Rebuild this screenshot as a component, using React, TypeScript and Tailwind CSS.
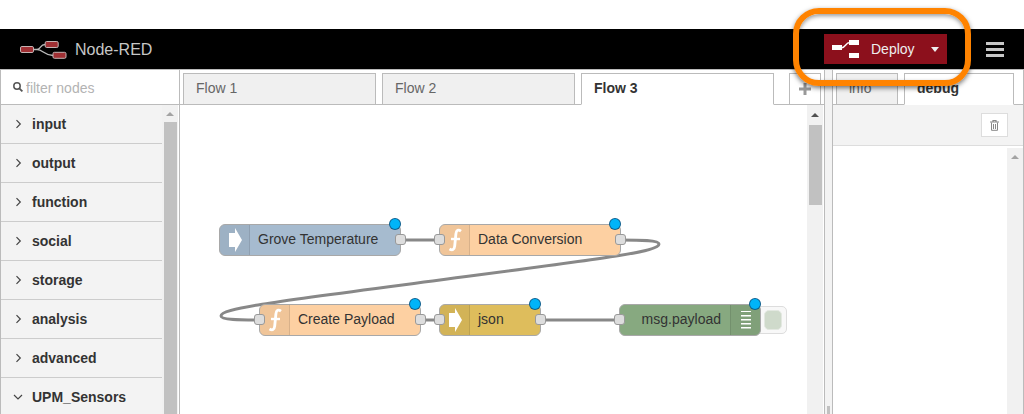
import React from "react";

const categories = [
  { name: "input", open: false },
  { name: "output", open: false },
  { name: "function", open: false },
  { name: "social", open: false },
  { name: "storage", open: false },
  { name: "analysis", open: false },
  { name: "advanced", open: false },
  { name: "UPM_Sensors", open: true },
];

const flows = ["Flow 1", "Flow 2", "Flow 3"];

function Logo() {
  return (
    <svg className="h-5 w-12 shrink-0" viewBox="0 0 48 20" fill="none">
      <path d="M13 10.5H17C21 10.5 20 5.5 25 5.5M17 10.5C23 10.5 24 16.5 33 16.5" stroke="#bbb" strokeWidth="1.3" />
      <rect x="0.5" y="7.5" width="13" height="6" rx="1.4" fill="#a03034" stroke="#c4b4b4" />
      <rect x="25.2" y="2.5" width="13" height="6" rx="1.4" fill="#a03034" stroke="#c4b4b4" />
      <rect x="33" y="13.3" width="13" height="6" rx="1.4" fill="#a03034" stroke="#c4b4b4" />
    </svg>
  );
}

function Arrow({ dark = false }: { dark?: boolean }) {
  return (
    <svg className="h-1 w-2" viewBox="0 0 8 4">
      <path d="M0 4L4 0L8 4Z" fill={dark ? "#505050" : "#a3a3a3"} />
    </svg>
  );
}

function ArrowIcon() {
  return (
    <svg className="h-[26px] w-[14px]" viewBox="0 0 14 26">
      <path d="M1 6H7V1L14 13L7 25V20H1Z" fill="#fff" />
    </svg>
  );
}

function FunctionIcon() {
  return (
    <svg className="h-6 w-[14px]" viewBox="0 0 14 24" fill="none" stroke="#fff">
      <path d="M13 3.2C10.3 1.2 8.3 2 7.9 6L6.7 18C6.3 22 4.3 22.6 1.5 21" strokeWidth="2.8" />
      <path d="M3 11H12" strokeWidth="2.4" />
    </svg>
  );
}

function DebugIcon() {
  return (
    <svg className="h-[18px] w-[10px]" viewBox="0 0 10 18">
      <path d="M0 0H10V1H0ZM0 4H10V5.4H0ZM0 8H10V9.4H0ZM0 12H10V13.4H0ZM0 16H10V17.4H0Z" fill="#fff" />
    </svg>
  );
}

type NodeProps = {
  label: string;
  place: string;
  icon: React.ReactNode;
  input?: boolean;
  output?: boolean;
  iconRight?: boolean;
};

const port = "absolute top-[9px] size-[11px] rounded-[3px] border border-[#999] bg-[#ddd]";

function FlowNode({ label, place, icon, input, output, iconRight }: NodeProps) {
  return (
    <div className={`absolute flex h-8 rounded-[6px] border border-[#a8a8a8] text-[#333] ${iconRight ? "flex-row-reverse" : ""} ${place}`}>
      <span
        className={`flex w-[30px] shrink-0 items-center justify-center bg-black/5 ${
          iconRight ? "rounded-r-[5px] border-l border-black/10" : "rounded-l-[5px] border-r border-black/10"
        }`}
      >
        {icon}
      </span>
      <span className={`flex-1 whitespace-nowrap text-sm leading-7 ${iconRight ? "pr-[9px] text-right" : "pl-2"}`}>{label}</span>
      {input && <i className={`${port} -left-[6px]`} />}
      {output && <i className={`${port} -right-[6px]`} />}
      <i className="absolute -top-[6px] right-0 size-[10px] rounded-full bg-[#00b4f8] ring-1 ring-[#0b5f8f]" />
    </div>
  );
}

function Palette() {
  return (
    <aside className="flex w-[180px] shrink-0 flex-col border-x border-[#bbb] bg-white">
      <label className="flex h-[35px] shrink-0 items-center border-b border-[#bbb] pl-3">
        <svg className="size-[10px] shrink-0" viewBox="0 0 10 10" fill="none" stroke="#555">
          <circle cx="4" cy="4" r="3.2" strokeWidth="1.5" />
          <path d="M6.3 6.3L9.4 9.4" strokeWidth="1.8" />
        </svg>
        <input
          type="text"
          aria-label="filter nodes"
          placeholder="filter nodes"
          className="ml-[3px] w-full min-w-0 bg-transparent pt-[2px] text-sm outline-none placeholder:text-[#b3b3b3]"
        />
      </label>
      <div className="flex min-h-0 flex-1">
        <ul className="flex-1 overflow-hidden bg-[#f3f3f3]">
          {categories.map((c) => (
            <li key={c.name} className="h-[39px] border-b border-[#ccc]">
              <button type="button" className="flex h-full w-full items-center pl-3 text-left text-sm font-bold text-[#333]">
                <svg className="mr-[9px] size-[10px]" viewBox="0 0 10 10" fill="none" stroke="#444" strokeWidth="1.2">
                  <path d={c.open ? "M1 3L5 7L9 3" : "M3.5 1.2L7.3 5L3.5 8.8"} />
                </svg>
                {c.name}
              </button>
            </li>
          ))}
        </ul>
        <div className="mr-px flex w-4 flex-col items-center bg-[#f1f1f1]">
          <span className="flex h-[17px] items-center">
            <Arrow />
          </span>
          <span className="w-[13px] flex-1 bg-[#c1c1c1]" />
        </div>
      </div>
    </aside>
  );
}

function Workspace() {
  return (
    <main className="flex min-w-0 flex-1 flex-col border-r border-[#bbb] bg-white">
      <div className="flex h-[35px] shrink-0 items-end border-b border-[#bbb] pl-[3px]">
        <nav className="-mb-px flex min-w-0 flex-1 gap-[6px] pr-[15px]">
          {flows.map((f) => (
            <button
              key={f}
              type="button"
              className={`h-8 min-w-0 flex-1 border border-[#bbb] pr-3 pb-[2px] pl-3 text-left text-sm ${
                f === "Flow 3" ? "border-b-white bg-white font-bold text-[#333]" : "bg-[#f0f0f0] text-[#666]"
              }`}
            >
              {f}
            </button>
          ))}
        </nav>
        <button
          type="button"
          aria-label="Add flow"
          className="-mb-px mr-[3px] flex h-8 w-8 items-center justify-center border border-[#bbb] bg-white"
        >
          <svg className="size-3" viewBox="0 0 12 12">
            <path d="M4.5 0H7.5V4.5H12V7.5H7.5V12H4.5V7.5H0V4.5H4.5Z" fill="#999" />
          </svg>
        </button>
      </div>
      <div className="flex min-h-0 flex-1">
        <div className="relative min-w-0 flex-1 overflow-hidden">
          <svg className="absolute top-0 left-0 h-[309px] w-[627px]" viewBox="180 105 627 309" fill="none" stroke="#888" strokeWidth="3">
            <path d="M400 240H440M420 320H440M540 320H620" />
            <path d="M620 240C640 240 659 240 659 244C659 252 600 259 440 280C280 301 221 308 221 316C221 320 240 320 260 320" />
          </svg>
          <FlowNode label="Grove Temperature" place="left-[39px] top-[119px] w-[182px] bg-[#a6bbcf]" icon={<ArrowIcon />} output />
          <FlowNode label="Data Conversion" place="left-[259px] top-[119px] w-[182px] bg-[#fdd0a2]" icon={<FunctionIcon />} input output />
          <FlowNode label="Create Payload" place="left-[79px] top-[199px] w-[162px] bg-[#fdd0a2]" icon={<FunctionIcon />} input output />
          <FlowNode label="json" place="left-[259px] top-[199px] w-[102px] bg-[#debd5c]" icon={<ArrowIcon />} input output />
          <div className="absolute top-[201px] left-[575px] flex h-7 w-8 items-center justify-end rounded-[5px] border border-[#ddd] bg-[#f8f8f8] pr-1">
            <button type="button" aria-label="Toggle debug output" className="h-5 w-[18px] rounded-[5px] border border-[#e3e8e1] bg-[#cfdacb]" />
          </div>
          <FlowNode label="msg.payload" place="left-[439px] top-[199px] w-[142px] bg-[#87a980]" icon={<DebugIcon />} input iconRight />
        </div>
        <div className="mr-px flex w-4 flex-col items-center bg-[#f1f1f1]">
          <span className="flex h-5 items-center">
            <Arrow dark />
          </span>
          <span className="h-20 w-[13px] bg-[#c1c1c1]" />
        </div>
      </div>
    </main>
  );
}

function Sidebar() {
  return (
    <aside className="flex w-48 shrink-0 flex-col border-x border-[#bbb] bg-white">
      <nav className="flex h-[35px] shrink-0 items-end gap-[6px] border-b border-[#bbb] pl-[3px]">
        <button type="button" className="-mb-px h-8 w-[62px] border border-[#bbb] bg-[#f0f0f0] pb-[2px] pl-3 text-left text-sm text-[#666]">
          info
        </button>
        <button type="button" className="-mb-px h-8 w-[110px] border border-[#bbb] border-b-white bg-white pb-[2px] pl-3 text-left text-sm font-bold text-[#333]">
          debug
        </button>
      </nav>
      <div className="flex h-[41px] shrink-0 items-center justify-end border-b border-[#ddd] bg-[#f3f3f3] pr-[15px]">
        <button type="button" aria-label="Clear debug" className="flex h-6 w-[27px] items-center justify-center border border-[#ddd] bg-white">
          <svg className="h-[11px] w-[9px]" viewBox="0 0 9 11" fill="none" stroke="#888">
            <path d="M0 2H9M3 2V0.5H6V2" strokeWidth="1.2" />
            <path d="M1.5 2.5V10.3H7.5V2.5M3.5 4V9M5.5 4V9" />
          </svg>
        </button>
      </div>
      <div className="flex flex-1 justify-end pt-[2px]">
        <span className="flex w-4 justify-center bg-[#f1f1f1] pt-[7px]">
          <Arrow />
        </span>
      </div>
    </aside>
  );
}

export default function App() {
  return (
    <div className="flex h-screen flex-col overflow-hidden bg-white pt-[29px] font-['Liberation_Sans',Arial,sans-serif]">
      <header className="flex h-10 shrink-0 items-center bg-black px-5">
        <Logo />
        <h1 className="ml-[7px] pt-[2px] text-base text-[#c7c7c7]">Node-RED</h1>
        <div className="relative ml-auto">
          <button type="button" className="flex h-[30px] w-[123px] items-center bg-[#8c101c] pl-2 text-sm text-[#eee]">
            <svg className="mr-3 h-[18px] w-[27px]" viewBox="0 0 27 18">
              <path d="M9 8C14 8 13 2.5 18 2.5" fill="none" stroke="#fff" strokeWidth="1.3" />
              <path d="M0 5H10V10H0ZM17 0H27V5H17ZM17 13H27V18H17Z" fill="#fff" />
            </svg>
            Deploy
            <svg className="mr-2 ml-auto h-[5px] w-2" viewBox="0 0 8 5">
              <path d="M0 0H8L4 5Z" fill="#eee" />
            </svg>
          </button>
          <div className="pointer-events-none absolute -top-[26px] -right-[24px] -left-[31px] z-10 h-[78px] rounded-[26px] border-6 border-[#ff8300] shadow-[0_2px_5px_rgba(0,0,0,0.55),inset_0_2px_4px_rgba(0,0,0,0.4)]" />
        </div>
        <button type="button" aria-label="Main menu" className="ml-[39px] flex w-[18px] flex-col gap-[3px]">
          <i className="h-[3px] w-full bg-[#c7c7c7]" />
          <i className="h-[3px] w-full bg-[#c7c7c7]" />
          <i className="h-[3px] w-full bg-[#c7c7c7]" />
        </button>
      </header>
      <div className="flex min-h-0 flex-1 border-t border-[#bbb]">
        <Palette />
        <Workspace />
        <div className="flex w-[7px] shrink-0 flex-col items-center justify-end bg-[#f3f3f3]">
          <span className="h-2 w-[3px] bg-[#c1c1c1]" />
        </div>
        <Sidebar />
      </div>
    </div>
  );
}
